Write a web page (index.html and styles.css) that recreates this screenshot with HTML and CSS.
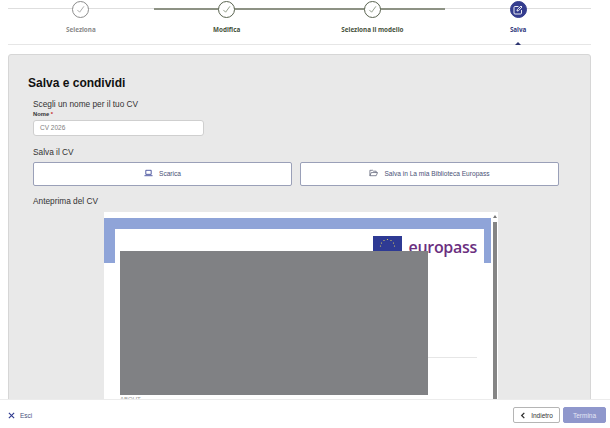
FILE: index.html
```html
<!DOCTYPE html>
<html lang="it">
<head>
    <meta charset="UTF-8">
    <meta name="viewport" content="width=device-width, initial-scale=1.0">
    <title>Salva e condividi</title>
    <link rel="stylesheet" href="styles.css">
</head>
<body>
    <div class="page">
        <!-- Stepper -->
        <div class="stepper">
            <div class="step">
                <span class="circle"><svg width="9" height="9" viewBox="0 0 10 10"><path d="M1.5 5.5 4 8 8.8 1.5" fill="none" stroke="#9a9a9a" stroke-width="0.9"/></svg></span>
                <span class="step-label">Seleziona</span>
            </div>
            <div class="step step-done">
                <span class="circle"><svg width="9" height="9" viewBox="0 0 10 10"><path d="M1.5 5.5 4 8 8.8 1.5" fill="none" stroke="#7c8a72" stroke-width="0.9"/></svg></span>
                <span class="step-label">Modifica</span>
            </div>
            <div class="step step-done">
                <span class="circle"><svg width="9" height="9" viewBox="0 0 10 10"><path d="M1.5 5.5 4 8 8.8 1.5" fill="none" stroke="#7c8a72" stroke-width="0.9"/></svg></span>
                <span class="step-label">Seleziona il modello</span>
            </div>
            <div class="step step-active">
                <span class="circle"><svg width="10" height="10" viewBox="0 0 10 10"><path d="M5.5 1.5H2a1 1 0 0 0-1 1V8a1 1 0 0 0 1 1h5.500a1 1 0 0 0 1-1V5M4 6l.3-1.500L8 1l1 1-3.500 3.700z" fill="none" stroke="#fff" stroke-width="0.9"/></svg></span>
                <span class="step-label">Salva</span>
            </div>
        </div>

        <!-- Main panel -->
        <div class="main">
            <div class="panel">
                <h1>Salva e condividi</h1>
                <div class="section">
                    <p class="section-title">Scegli un nome per il tuo CV</p>
                    <label class="field-label">Nome <span class="required">*</span></label>
                    <div class="text-input">CV 2026</div>

                    <p class="section-title save-title">Salva il CV</p>
                    <div class="save-buttons">
                        <button class="save-button">
                            <svg width="9" height="8" viewBox="0 0 10 8"><path d="M2 1h6v4.500H2zM.5 7h9" fill="none" stroke="#2f3a8f" stroke-width="0.9"/></svg>
                            Scarica
                        </button>
                        <button class="save-button">
                            <svg width="9" height="8" viewBox="0 0 10 8"><path d="M1 7V1h3l1 1h3v1.500M1 7l1.500-3.500h7L8 7z" fill="none" stroke="#555a70" stroke-width="0.8"/></svg>
                            Salva in La mia Biblioteca Europass
                        </button>
                    </div>

                    <p class="section-title preview-title">Anteprima del CV</p>
                    <div class="preview">
                        <div class="cv-page">
                            <div class="cv-frame">
                                <div class="cv-logo">
                                    <svg class="eu-flag" width="29" height="20" viewBox="0 0 29 20">
                                        <rect width="29" height="20" fill="#2e3a94"/>
                                        <g fill="#e8d95a">
                                            <circle cx="14.500" cy="3.500" r="0.600"/>
                                            <circle cx="18" cy="4.500" r="0.600"/>
                                            <circle cx="20.500" cy="7" r="0.600"/>
                                            <circle cx="21.500" cy="10" r="0.600"/>
                                            <circle cx="11" cy="4.500" r="0.600"/>
                                            <circle cx="8.500" cy="7" r="0.600"/>
                                            <circle cx="7.500" cy="10" r="0.600"/>
                                        </g>
                                    </svg>
                                    <span class="cv-brand">europass</span>
                                </div>
                            </div>
                            <div class="cv-rule"></div>
                            <div class="cv-small">ABOUT</div>
                        </div>
                        <div class="redacted"></div>
                        <div class="scrollbar"><span class="scroll-arrow"></span><span class="scroll-thumb"></span></div>
                    </div>
                </div>
            </div>
        </div>

        <!-- Footer -->
        <div class="footer">
            <a class="exit-link" href="#">
                <svg width="7" height="7" viewBox="0 0 8 8"><path d="M1 1l6 6M7 1 1 7" fill="none" stroke="#2f3a8f" stroke-width="1.300"/></svg>
                Esci
            </a>
            <div class="footer-buttons">
                <button class="back-button">
                    <svg width="6" height="7" viewBox="0 0 6 8"><path d="M4.500 1 1.500 4l3 3" fill="none" stroke="#333" stroke-width="1.500"/></svg>
                    Indietro
                </button>
                <button class="finish-button">Termina</button>
            </div>
        </div>
    </div>
</body>
</html>
```

FILE: styles.css
```css
body {
    margin: 0;
    background: #fff;
    font-family: "Liberation Sans", Arial, sans-serif;
    color: #222;
}

.page {
    height: 428px;
    display: flex;
    flex-direction: column;
    overflow: hidden;
}

/* Stepper */
.stepper {
    display: grid;
    grid-template-columns: repeat(4, 1fr);
    height: 44px;
    margin: 0 19px 0 8px;
    border-bottom: 1px solid #e6e6e6;
    flex-shrink: 0;
}

.step {
    position: relative;
    display: flex;
    flex-direction: column;
    align-items: center;
}

.step::before {
    content: '';
    position: absolute;
    left: 0;
    right: 0;
    top: 8px;
    height: 1px;
    background: #dedede;
}

.step-done::before {
    top: 8px;
    height: 2px;
    background: #8d9284;
}

.circle {
    position: relative;
    width: 15px;
    height: 15px;
    margin-top: 1px;
    border: 1px solid #8c8c8c;
    border-radius: 50%;
    background: #fff;
    display: flex;
    justify-content: center;
    align-items: center;
}

.step-done .circle {
    border-color: #5a6450;
}

.step-active .circle {
    background: #343c8e;
    border-color: #343c8e;
}

.step-label {
    margin-top: 7px;
    font-family: "Noto Sans", sans-serif;
    font-size: 6.300px;
    font-weight: 700;
    color: #8a8a8a;
}

.step-done .step-label {
    color: #46523c;
}

.step-active .step-label {
    color: #343c7e;
}

.step-active::after {
    content: '';
    position: absolute;
    left: 50%;
    bottom: -1px;
    margin-left: -3px;
    border-left: 3px solid transparent;
    border-right: 3px solid transparent;
    border-bottom: 3px solid #2c3470;
}

/* Panel */
.main {
    flex: 1;
    min-height: 0;
    overflow: hidden;
    padding: 9px 19px 0 8px;
}

.panel {
    height: 400px;
    box-sizing: border-box;
    background: #e9e9e9;
    border: 1px solid #d6d6d6;
    border-radius: 3px;
    padding: 21px 0 0 19px;
}

h1 {
    margin: 0;
    font-size: 12px;
    line-height: 15px;
    font-weight: 700;
    color: #111;
}

.section {
    padding-left: 5px;
}

.section-title {
    margin: 0;
    font-size: 8.300px;
    line-height: 11px;
    color: #333;
}

.section > .section-title:first-child {
    margin-top: 8px;
}

.field-label {
    display: block;
    font-size: 5.800px;
    line-height: 8px;
    font-weight: 700;
    color: #333;
}

.required {
    color: #c62828;
}

.text-input {
    width: 171px;
    height: 16px;
    box-sizing: border-box;
    margin-top: 2px;
    padding-left: 6px;
    background: #fff;
    border: 1px solid #cfcfcf;
    border-radius: 3px;
    font-size: 6.500px;
    line-height: 14px;
    color: #808080;
}

.save-title {
    margin-top: 11px;
}

.save-buttons {
    display: flex;
    gap: 8px;
    margin-top: 4px;
}

.save-button {
    width: 259px;
    height: 24px;
    padding: 0 0 2px;
    background: #fff;
    border: 1px solid #9aa0b8;
    border-radius: 2px;
    font-family: inherit;
    font-size: 6.600px;
    color: #4a5276;
    display: flex;
    justify-content: center;
    align-items: center;
    gap: 6px;
}

.preview-title {
    margin-top: 10px;
}

.preview {
    position: relative;
    width: 394px;
    height: 200px;
    margin: 5px 0 0 71px;
    background: #fff;
    overflow: hidden;
}

.cv-page {
    padding-top: 6px;
    width: 388px;
}

.cv-frame {
    height: 45px;
    box-sizing: border-box;
    border-top: 11px solid #8fa4d8;
    border-left: 11px solid #8fa4d8;
    border-right: 8px solid #8fa4d8;
    display: flex;
    justify-content: flex-end;
    padding: 7px 7px 0 0;
}

.cv-logo {
    display: flex;
    align-items: flex-start;
    gap: 7px;
}

.cv-brand {
    font-family: "Open Sans", sans-serif;
    font-size: 16px;
    line-height: 22px;
    font-weight: 600;
    color: #6b2f7f;
    letter-spacing: -0.3px;
}

.cv-rule {
    height: 1px;
    margin: 94px 15px 0 16px;
    background: #e6e6e6;
}

.cv-small {
    margin: 37px 0 0 16px;
    font-size: 6px;
    line-height: 8px;
    color: #999;
}

.redacted {
    position: absolute;
    left: 16px;
    top: 39px;
    width: 308px;
    height: 144px;
    background: #808184;
}

.scrollbar {
    position: absolute;
    right: 0;
    top: 0;
    bottom: 0;
    width: 7px;
    background: #fff;
    display: flex;
    flex-direction: column;
    align-items: center;
}

.scroll-arrow {
    margin-top: 3px;
    border-left: 2px solid transparent;
    border-right: 2px solid transparent;
    border-bottom: 3px solid #777;
}

.scroll-thumb {
    flex: 1;
    width: 4px;
    margin-top: 4px;
    background: #858585;
}

/* Footer */
.footer {
    position: relative;
    height: 29px;
    box-sizing: border-box;
    flex-shrink: 0;
    background: #fff;
    border-top: 1px solid #ececec;
    display: flex;
    justify-content: space-between;
    align-items: center;
    padding: 2px 4px 0 8px;
    margin-top: -29px;
}

.exit-link {
    display: flex;
    align-items: center;
    gap: 5px;
    font-size: 6.500px;
    color: #4a5280;
    text-decoration: none;
}

.footer-buttons {
    display: flex;
    gap: 3px;
}

.back-button,
.finish-button {
    height: 16px;
    padding: 0;
    border-radius: 2px;
    font-family: inherit;
    font-size: 6.500px;
    display: flex;
    justify-content: center;
    align-items: center;
}

.back-button {
    width: 47px;
    gap: 5px;
    background: #fff;
    border: 1px solid #b5b5b5;
    color: #333;
}

.finish-button {
    width: 43px;
    background: #8f97cc;
    border: 1px solid #8f97cc;
    color: #e4e6f5;
}
```
